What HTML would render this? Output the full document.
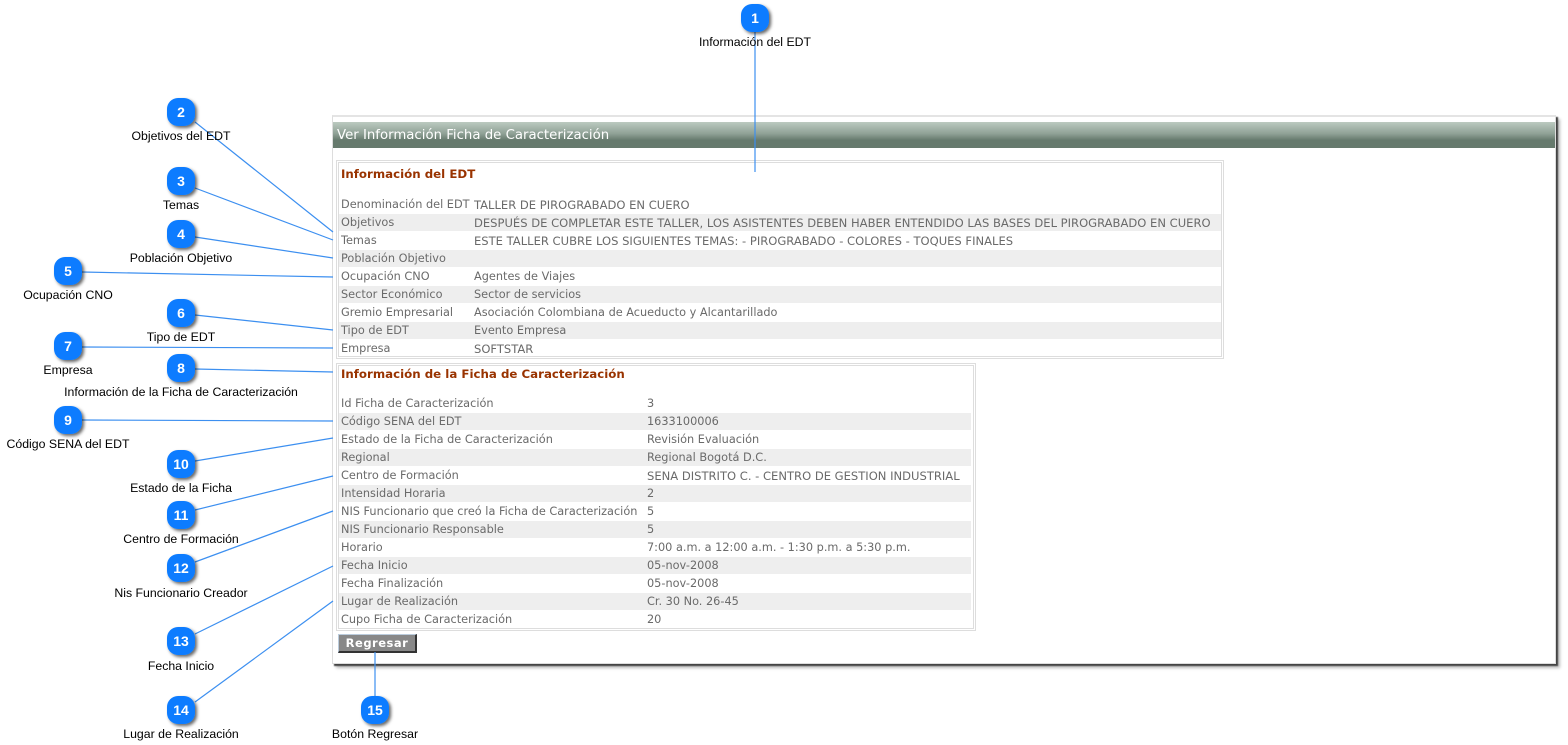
<!DOCTYPE html>
<html><head><meta charset="utf-8"><style>
body{margin:0;width:1568px;height:745px;background:#fff;position:relative;overflow:hidden;font-family:"DejaVu Sans",Verdana,sans-serif}
.panel{position:absolute;left:332px;top:115px;width:1222px;height:546px;border:1px solid #ddd;border-top:2px solid #e4e4e4;background:#fff;box-shadow:2px 2px 1px #444,4px 4px 3px #bbb}
.hdr{position:absolute;left:0;top:5px;width:1222px;height:26px;background:linear-gradient(#bccac0,#8fa196 45%,#667a6d 70%,#667a6d);color:#fff;font-size:13.3px;line-height:27px;padding-left:4px;box-sizing:border-box}
.fs{position:absolute;border:1px solid #ddd;background:#fff}
.fs .in{position:absolute;left:1px;top:1px;right:1px;bottom:1px;border:1px solid #ddd}
.h{position:absolute;color:#993300;font-weight:bold;font-size:11.8px}
.r{position:absolute;height:17px;font-size:11.3px;line-height:18px;color:#6a6a6a;white-space:nowrap;overflow:hidden}
.u{font-size:11.55px}
.g{background:#eee}
.lab{position:absolute;font-family:"Liberation Sans",Arial,sans-serif;font-size:12.3px;color:#000;white-space:nowrap;transform:translateX(-50%)}
.btn{position:absolute;left:338px;top:634px;width:76px;height:16px;background:#888;border:1px solid #bcd;border-right:2px solid #333;border-bottom:2px solid #333;color:#fff;font-weight:bold;font-size:11.5px;text-align:center;line-height:16px;letter-spacing:.5px}
</style></head><body>
<div class="panel"><div class="hdr">Ver Información Ficha de Caracterización</div></div>

<div class="fs" style="left:336px;top:160px;width:886px;height:197px"><div class="in"></div></div>
<div class="h" style="left:341px;top:167px">Información del EDT</div>
<div class="r" style="left:341px;top:196px">Denominación del EDT</div><div class="r u" style="left:474px;top:196px">TALLER DE PIROGRABADO EN CUERO</div>
<div class="r g" style="left:339px;top:214px;width:131px;padding-left:2px">Objetivos</div><div class="r g u" style="left:472px;top:214px;width:747px;padding-left:2px">DESPUÉS DE COMPLETAR ESTE TALLER, LOS ASISTENTES DEBEN HABER ENTENDIDO LAS BASES DEL PIROGRABADO EN CUERO</div>
<div class="r" style="left:341px;top:232px">Temas</div><div class="r u" style="left:474px;top:232px">ESTE TALLER CUBRE LOS SIGUIENTES TEMAS: - PIROGRABADO - COLORES - TOQUES FINALES</div>
<div class="r g" style="left:339px;top:250px;width:131px;padding-left:2px">Población Objetivo</div><div class="r g" style="left:472px;top:250px;width:749px"></div>
<div class="r" style="left:341px;top:268px">Ocupación CNO</div><div class="r" style="left:474px;top:268px">Agentes de Viajes</div>
<div class="r g" style="left:339px;top:286px;width:131px;padding-left:2px">Sector Económico</div><div class="r g" style="left:472px;top:286px;width:747px;padding-left:2px">Sector de servicios</div>
<div class="r" style="left:341px;top:304px">Gremio Empresarial</div><div class="r" style="left:474px;top:304px">Asociación Colombiana de Acueducto y Alcantarillado</div>
<div class="r g" style="left:339px;top:322px;width:131px;padding-left:2px">Tipo de EDT</div><div class="r g" style="left:472px;top:322px;width:747px;padding-left:2px">Evento Empresa</div>
<div class="r" style="left:341px;top:340px">Empresa</div><div class="r u" style="left:474px;top:340px">SOFTSTAR</div>

<div class="fs" style="left:336px;top:363px;width:638px;height:266px"><div class="in"></div></div>
<div class="h" style="left:341px;top:367px">Información de la Ficha de Caracterización</div>
<div class="r" style="left:341px;top:395px">Id Ficha de Caracterización</div><div class="r" style="left:647px;top:395px">3</div>
<div class="r g" style="left:339px;top:413px;width:304px;padding-left:2px">Código SENA del EDT</div><div class="r g" style="left:645px;top:413px;width:324px;padding-left:2px">1633100006</div>
<div class="r" style="left:341px;top:431px">Estado de la Ficha de Caracterización</div><div class="r" style="left:647px;top:431px">Revisión Evaluación</div>
<div class="r g" style="left:339px;top:449px;width:304px;padding-left:2px">Regional</div><div class="r g" style="left:645px;top:449px;width:324px;padding-left:2px">Regional Bogotá D.C.</div>
<div class="r" style="left:341px;top:467px">Centro de Formación</div><div class="r u" style="left:647px;top:467px">SENA DISTRITO C. - CENTRO DE GESTION INDUSTRIAL</div>
<div class="r g" style="left:339px;top:485px;width:304px;padding-left:2px">Intensidad Horaria</div><div class="r g" style="left:645px;top:485px;width:324px;padding-left:2px">2</div>
<div class="r" style="left:341px;top:503px">NIS Funcionario que creó la Ficha de Caracterización</div><div class="r" style="left:647px;top:503px">5</div>
<div class="r g" style="left:339px;top:521px;width:304px;padding-left:2px">NIS Funcionario Responsable</div><div class="r g" style="left:645px;top:521px;width:324px;padding-left:2px">5</div>
<div class="r" style="left:341px;top:539px">Horario</div><div class="r" style="left:647px;top:539px">7:00 a.m. a 12:00 a.m. - 1:30 p.m. a 5:30 p.m.</div>
<div class="r g" style="left:339px;top:557px;width:304px;padding-left:2px">Fecha Inicio</div><div class="r g" style="left:645px;top:557px;width:324px;padding-left:2px">05-nov-2008</div>
<div class="r" style="left:341px;top:575px">Fecha Finalización</div><div class="r" style="left:647px;top:575px">05-nov-2008</div>
<div class="r g" style="left:339px;top:593px;width:304px;padding-left:2px">Lugar de Realización</div><div class="r g" style="left:645px;top:593px;width:324px;padding-left:2px">Cr. 30 No. 26-45</div>
<div class="r" style="left:341px;top:611px">Cupo Ficha de Caracterización</div><div class="r" style="left:647px;top:611px">20</div>
<div class="btn">Regresar</div>

<svg width="1568" height="745" style="position:absolute;left:0;top:0" xmlns="http://www.w3.org/2000/svg">
<defs><filter id="s" x="-50%" y="-50%" width="200%" height="200%"><feDropShadow dx="2" dy="2" stdDeviation="1.5" flood-color="#000" flood-opacity=".6"/></filter></defs>
<g stroke="#3c8ff0" stroke-width="1.2" fill="none">
<line x1="755" y1="30" x2="755" y2="172"/>
<line x1="195" y1="122" x2="333" y2="232"/>
<line x1="195" y1="188" x2="333" y2="240"/>
<line x1="195" y1="237" x2="333" y2="258"/>
<line x1="82" y1="272" x2="333" y2="277"/>
<line x1="195" y1="315" x2="333" y2="330"/>
<line x1="82" y1="347" x2="333" y2="348"/>
<line x1="195" y1="369" x2="333" y2="372"/>
<line x1="82" y1="420" x2="333" y2="421"/>
<line x1="195" y1="461" x2="333" y2="438"/>
<line x1="195" y1="510" x2="333" y2="476"/>
<line x1="195" y1="562" x2="333" y2="511"/>
<line x1="195" y1="634" x2="333" y2="566"/>
<line x1="195" y1="702" x2="333" y2="601"/>
<line x1="375" y1="652" x2="375" y2="698"/>
</g>
<g fill="#0a7cff" filter="url(#s)">
<rect x="741" y="4" width="28" height="28" rx="11"/>
<rect x="167" y="98" width="28" height="28" rx="11"/>
<rect x="167" y="167" width="28" height="28" rx="11"/>
<rect x="167" y="220" width="28" height="28" rx="11"/>
<rect x="54" y="257" width="28" height="28" rx="11"/>
<rect x="167" y="299" width="28" height="28" rx="11"/>
<rect x="54" y="332" width="28" height="28" rx="11"/>
<rect x="167" y="354" width="28" height="28" rx="11"/>
<rect x="54" y="406" width="28" height="28" rx="11"/>
<rect x="167" y="450" width="28" height="28" rx="11"/>
<rect x="167" y="501" width="28" height="28" rx="11"/>
<rect x="167" y="554" width="28" height="28" rx="11"/>
<rect x="167" y="627" width="28" height="28" rx="11"/>
<rect x="167" y="696" width="28" height="28" rx="11"/>
<rect x="361" y="696" width="28" height="28" rx="11"/>
</g>
<g fill="#fff" font-family="Liberation Sans Narrow, Liberation Sans, Arial, sans-serif" font-weight="bold" font-size="14" text-anchor="middle">
<text x="755" y="23">1</text><text x="181" y="117">2</text><text x="181" y="186">3</text><text x="181" y="239">4</text>
<text x="68" y="276">5</text><text x="181" y="318">6</text><text x="68" y="351">7</text><text x="181" y="373">8</text>
<text x="68" y="425">9</text><text x="181" y="469">10</text><text x="181" y="520">11</text><text x="181" y="573">12</text>
<text x="181" y="646">13</text><text x="181" y="715">14</text><text x="375" y="715">15</text>
</g>
</svg>
<div class="lab" style="left:755px;top:35px">Información del EDT</div>
<div class="lab" style="left:181px;top:129px">Objetivos del EDT</div>
<div class="lab" style="left:181px;top:198px">Temas</div>
<div class="lab" style="left:181px;top:251px">Población Objetivo</div>
<div class="lab" style="left:68px;top:288px">Ocupación CNO</div>
<div class="lab" style="left:181px;top:330px">Tipo de EDT</div>
<div class="lab" style="left:68px;top:363px">Empresa</div>
<div class="lab" style="left:181px;top:385px">Información de la Ficha de Caracterización</div>
<div class="lab" style="left:68px;top:437px">Código SENA del EDT</div>
<div class="lab" style="left:181px;top:481px">Estado de la Ficha</div>
<div class="lab" style="left:181px;top:532px">Centro de Formación</div>
<div class="lab" style="left:181px;top:586px">Nis Funcionario Creador</div>
<div class="lab" style="left:181px;top:659px">Fecha Inicio</div>
<div class="lab" style="left:181px;top:727px">Lugar de Realización</div>
<div class="lab" style="left:375px;top:727px">Botón Regresar</div>
</body></html>
